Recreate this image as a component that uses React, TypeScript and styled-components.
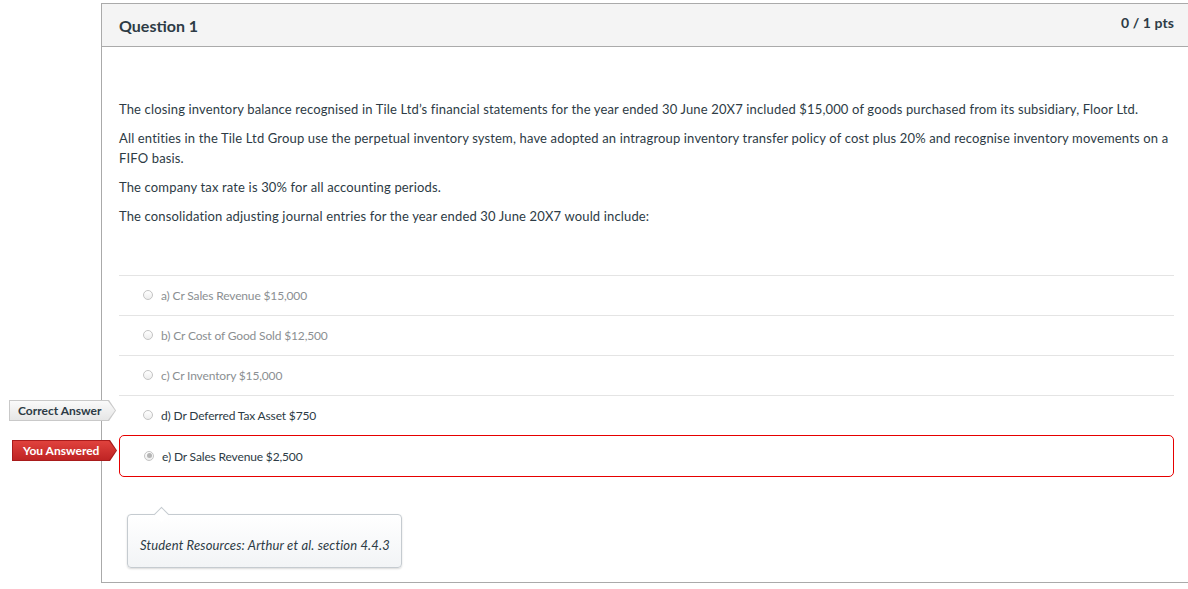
import styled, { createGlobalStyle } from 'styled-components';

const GlobalStyle = createGlobalStyle`
  html, body {
    margin: 0;
    padding: 0;
    background: #fff;
    overflow: hidden;
  }
  body {
    font-family: Lato, "Open Sans", "Liberation Sans", sans-serif;
    color: #2d3b45;
  }
`;

type Answer = {
  id: string;
  text: string;
  state: 'plain' | 'correct' | 'chosen';
};

const answers: Answer[] = [
  { id: 'a', text: 'a) Cr Sales Revenue $15,000', state: 'plain' },
  { id: 'b', text: 'b) Cr Cost of Good Sold $12,500', state: 'plain' },
  { id: 'c', text: 'c) Cr Inventory $15,000', state: 'plain' },
  { id: 'd', text: 'd) Dr Deferred Tax Asset $750', state: 'correct' },
  { id: 'e', text: 'e) Dr Sales Revenue $2,500', state: 'chosen' },
];

const Page = styled.div`
  padding: 3px 0 0 101px;
  height: 589px;
  box-sizing: border-box;
`;

const QuestionBox = styled.div`
  border: 1px solid #aaaaaa;
  border-right: none;
  width: 1087px;
  height: 580px;
  box-sizing: border-box;
  display: flex;
  flex-direction: column;
`;

const Header = styled.div`
  height: 42px;
  background: #f4f4f4;
  border-bottom: 1px solid #aaaaaa;
  display: flex;
  align-items: center;
  justify-content: space-between;
  padding: 0 14px 0 17px;
  box-sizing: content-box;
`;

const Title = styled.h2`
  margin: 0;
  font-size: 16px;
  font-weight: 700;
  color: #2d3b45;
  padding-top: 1px;
`;

const Points = styled.span`
  font-size: 14px;
  font-weight: 700;
  color: #2d3b45;
  margin-top: -6px;
  letter-spacing: 0.1px;
`;

const Body = styled.div`
  padding: 53px 14px 0 17px;
`;

const Para = styled.p`
  margin: 0 0 9.5px;
  font-size: 13px;
  line-height: 19.5px;
  letter-spacing: 0.15px;
  color: #2d3b45;
`;

const AnswerList = styled.div`
  margin-top: 49px;
`;

const Row = styled.div<{ $state: Answer['state'] }>`
  position: relative;
  height: ${(p) => (p.$state === 'chosen' ? '40px' : '39px')};
  display: flex;
  align-items: center;
  padding-left: 24px;
  border-top: 1px solid #e4e4e4;
  ${(p) =>
    p.$state === 'chosen' &&
    `
    border: 1px solid #e60000;
    border-radius: 5px;
  `}
  color: ${(p) => (p.$state === 'plain' ? '#8b8f92' : '#2d3b45')};
  font-size: 12px;
  letter-spacing: -0.15px;
`;

const Radio = styled.span<{ $checked: boolean }>`
  width: 8px;
  height: 8px;
  border-radius: 50%;
  border: 1px solid #c4c4c4;
  background: linear-gradient(#ffffff, #ededed);
  margin-right: 8px;
  display: inline-flex;
  align-items: center;
  justify-content: center;
  margin-top: -1px;
  &::after {
    content: '';
    width: 5px;
    height: 5px;
    border-radius: 50%;
    background: ${(p) => (p.$checked ? '#b5b5b5' : 'transparent')};
  }
`;

const TagOuter = styled.div<{ $kind: 'correct' | 'wrong' }>`
  position: absolute;
  top: 4px;
  left: ${(p) => (p.$kind === 'correct' ? '-110px' : '-108px')};
  width: ${(p) => (p.$kind === 'correct' ? '107px' : '105px')};
  height: 21px;
  padding: 1px;
  box-sizing: border-box;
  background: ${(p) => (p.$kind === 'correct' ? '#c9c9c9' : '#a81b1b')};
  clip-path: polygon(0 0, calc(100% - 7px) 0, 100% 50%, calc(100% - 7px) 100%, 0 100%);
`;

const TagInner = styled.div<{ $kind: 'correct' | 'wrong' }>`
  height: 100%;
  display: flex;
  align-items: center;
  padding-left: ${(p) => (p.$kind === 'correct' ? '8px' : '10px')};
  font-size: 12px;
  font-weight: 700;
  letter-spacing: 0;
  color: ${(p) => (p.$kind === 'correct' ? '#2d3b45' : '#ffffff')};
  background: ${(p) =>
    p.$kind === 'correct'
      ? 'linear-gradient(#fafafa, #e6e6e6)'
      : 'linear-gradient(#e0423d, #bf2424)'};
  clip-path: polygon(0 0, calc(100% - 7px) 0, 100% 50%, calc(100% - 7px) 100%, 0 100%);
`;

const Tip = styled.div`
  position: relative;
  margin: 37px 0 0 8px;
  width: 275px;
  height: 54px;
  box-sizing: border-box;
  border: 1px solid #c5cbd0;
  border-radius: 4px;
  background: linear-gradient(#ffffff, #f2f4f6);
  box-shadow: 0 1px 2px rgba(0, 0, 0, 0.15);
  display: flex;
  align-items: center;
  padding: 7px 12px 0;
  font-size: 13px;
  font-style: italic;
  letter-spacing: 0.15px;
  white-space: nowrap;
  color: #2d3b45;
  &::before {
    content: '';
    position: absolute;
    top: -6px;
    left: 28px;
    width: 10px;
    height: 10px;
    background: #ffffff;
    border-top: 1px solid #c5cbd0;
    border-left: 1px solid #c5cbd0;
    transform: rotate(45deg);
  }
`;

export default function App() {
  return (
    <Page>
      <GlobalStyle />
      <QuestionBox>
        <Header>
          <Title>Question 1</Title>
          <Points>0 / 1 pts</Points>
        </Header>
        <Body>
          <Para>
            The closing inventory balance recognised in Tile Ltd’s financial statements for the year
            ended 30 June 20X7 included $15,000 of goods purchased from its subsidiary, Floor Ltd.
          </Para>
          <Para>
            All entities in the Tile Ltd Group use the perpetual inventory system, have adopted an
            intragroup inventory transfer policy of cost plus 20% and recognise inventory movements on
            a FIFO basis.
          </Para>
          <Para>The company tax rate is 30% for all accounting periods.</Para>
          <Para>
            The consolidation adjusting journal entries for the year ended 30 June 20X7 would
            include:
          </Para>
          <AnswerList>
            {answers.map((a) => (
              <Row key={a.id} $state={a.state}>
                {a.state === 'correct' && (
                  <TagOuter $kind="correct">
                    <TagInner $kind="correct">Correct Answer</TagInner>
                  </TagOuter>
                )}
                {a.state === 'chosen' && (
                  <TagOuter $kind="wrong">
                    <TagInner $kind="wrong">You Answered</TagInner>
                  </TagOuter>
                )}
                <Radio $checked={a.state === 'chosen'} />
                {a.text}
              </Row>
            ))}
          </AnswerList>
          <Tip>Student Resources: Arthur et al. section 4.4.3</Tip>
        </Body>
      </QuestionBox>
    </Page>
  );
}
